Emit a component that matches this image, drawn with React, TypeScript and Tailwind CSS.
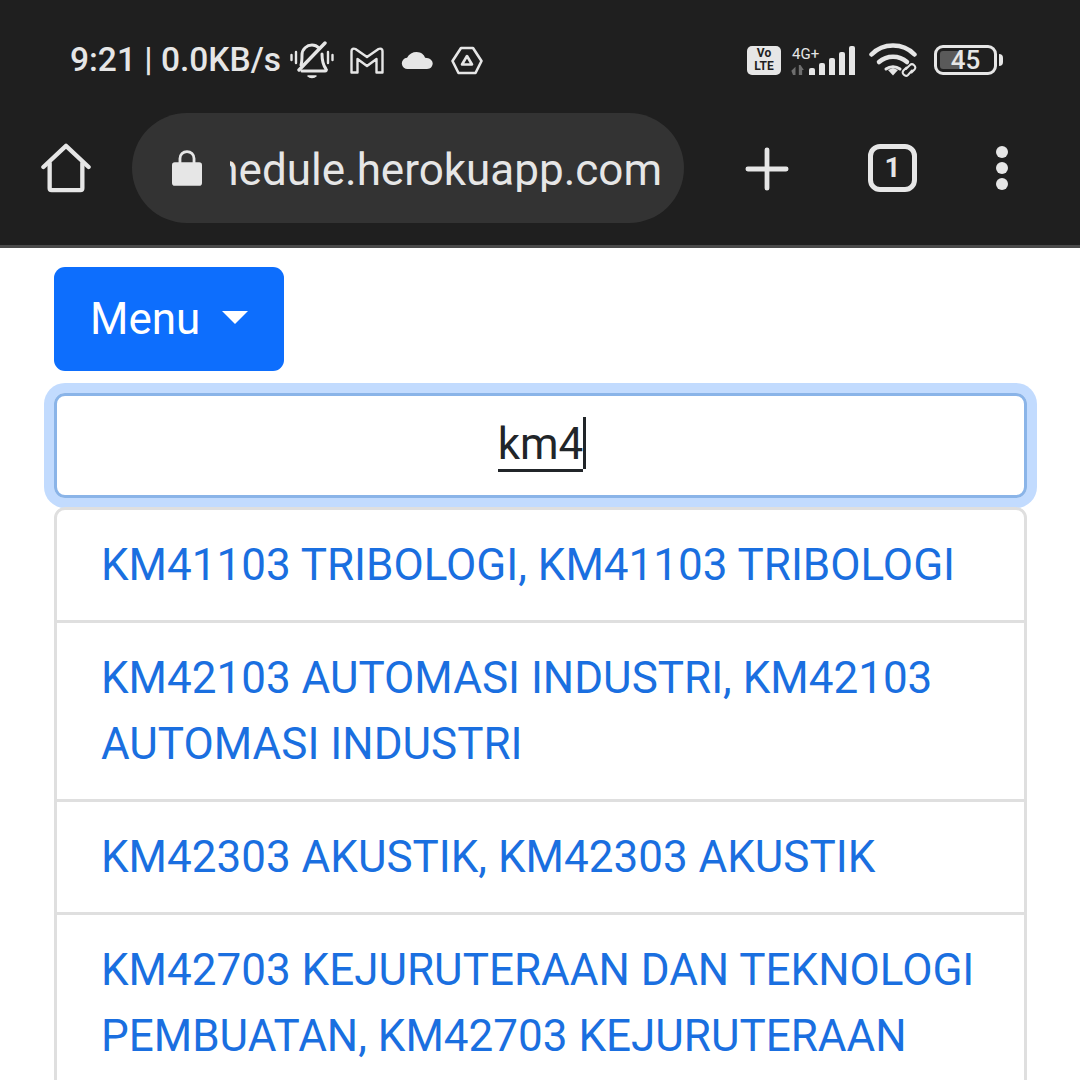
const results = [
  "KM41103 TRIBOLOGI, KM41103 TRIBOLOGI",
  "KM42103 AUTOMASI INDUSTRI, KM42103 AUTOMASI INDUSTRI",
  "KM42303 AKUSTIK, KM42303 AKUSTIK",
  "KM42703 KEJURUTERAAN DAN TEKNOLOGI PEMBUATAN, KM42703 KEJURUTERAAN DAN TEKNOLOGI PEMBUATAN",
];

function MutedBell() {
  return (
    <svg width="44" height="38" viewBox="0 0 44 38" fill="none" stroke="#e6e6e6" strokeWidth="3" strokeLinecap="round" strokeLinejoin="round">
      <path d="M11 24c1-3 1-6 1-10 0-6 5-10 10-10 3 0 5 1 7 3" />
      <path d="M32 13c0 7 1 11 4 15 1 1 0 2-1 2H12" />
      <path d="M35 2 9 29" strokeWidth="3.4" />
      <path d="M18 35c2 2 6 2 8 0z" fill="#e6e6e6" strokeWidth="1.5" />
      <path d="M6 11v11M1.500 14v5M38 11v11M42.500 14v5" strokeWidth="2.4" />
    </svg>
  );
}

function GmailIcon() {
  return (
    <svg width="34" height="27" viewBox="0 0 34 27" fill="none" stroke="#e6e6e6" strokeWidth="2.4" strokeLinejoin="round">
      <path d="M1.500 4c0-2 2-3 4-2l11.500 8 11.500-8c2-1 4 0 4 2v21.500h-6V12l-9.500 7-9.500-7v13.500h-6z" />
    </svg>
  );
}

function DriveIcon() {
  return (
    <svg width="32" height="29" viewBox="0 0 32 29" fill="none" stroke="#e6e6e6" strokeWidth="2.6" strokeLinejoin="round">
      <path d="M10 2h12l8.500 13-6 12H7.500l-6-12z" />
      <path d="M16 10l5 8.500H11z" />
    </svg>
  );
}

function SignalBars() {
  const heights = [7, 12, 17, 23, 29];
  return (
    <div className="flex items-end gap-[4px]">
      {heights.map((h) => (
        <div key={h} className="w-[6px] rounded-t-[2px] bg-[#e6e6e6]" style={{ height: h }} />
      ))}
    </div>
  );
}

function WifiLink() {
  return (
    <svg width="50" height="35" viewBox="0 0 50 35" fill="none" strokeLinecap="round">
      <path d="M2.500 11.500C14 -0.500 34 -0.500 45.500 11.500" stroke="#e6e6e6" strokeWidth="4.500" />
      <path d="M10 19c8-7 20-7 28 0" stroke="#e6e6e6" strokeWidth="4.500" />
      <path d="M17 26c4-3 10-3 14 0" stroke="#e6e6e6" strokeWidth="3" />
      <path d="M19 27l5-2 5 2-5 5.500z" fill="#e6e6e6" />
      <path d="M37 26l4-4c2.500-2.500 7 1.500 4.500 4.500l-3 3M43 27.500l-4 4.500c-2.500 2.500-7-1.500-4.500-4.500l3-3" stroke="#e6e6e6" strokeWidth="2" />
    </svg>
  );
}

function Battery() {
  return (
    <div className="flex items-center gap-[2px]">
      <div className="relative h-[30px] w-[63px] rounded-[9px] border-[3px] border-[#e6e6e6] p-[3px]">
        <div className="h-full w-[42%] rounded-[3px] bg-[#5a5a5a]" />
        <span className="absolute inset-0 flex items-center justify-center text-[26px] font-medium leading-none text-[#e6e6e6]">45</span>
      </div>
      <div className="h-[12px] w-[4px] rounded-r-full bg-[#e6e6e6]" />
    </div>
  );
}

function StatusBar() {
  return (
    <div className="flex h-[113px] items-center justify-between pl-[70px] pr-[77px] pt-[7px] text-[#e6e6e6]">
      <div className="flex items-center">
        <span className="text-[33.500px] font-medium leading-none">9:21 | 0.0KB/s</span>
        <span className="ml-[9px] flex"><MutedBell /></span>
        <span className="ml-[16px] flex"><GmailIcon /></span>
        <svg className="ml-[17px]" width="33" height="19" viewBox="0 0 34 20" fill="#e6e6e6">
          <path d="M7 19a6 6 0 0 1-1-12c2-4 6-6 10-6 5 0 8 3 9 6 5 0 8 3 8 6s-2 6-6 6z" />
        </svg>
        <span className="ml-[17px] flex"><DriveIcon /></span>
      </div>
      <div className="flex items-center">
        <div className="flex h-[29px] w-[34px] flex-col items-center justify-center rounded-[5px] bg-[#e6e6e6] text-[12px] font-bold leading-[13px] text-[#1f1f1f]">
          <span>Vo</span>
          <span>LTE</span>
        </div>
        <div className="ml-[9px] flex items-end">
          <div className="flex w-[19px] flex-col overflow-visible">
            <span className="whitespace-nowrap pl-[2px] text-[15px] leading-[19px]">4G+</span>
            <svg className="mt-[1px]" width="16" height="10" viewBox="0 0 16 12" fill="#6e6e6e">
              <path d="M0 7l5-5v10H2zM9 0h2l4 6h-2v6H9z" />
            </svg>
          </div>
          <SignalBars />
        </div>
        <span className="ml-[14px] flex"><WifiLink /></span>
        <span className="ml-[15px] flex"><Battery /></span>
      </div>
    </div>
  );
}

function Toolbar() {
  return (
    <div className="flex h-[135px] items-start border-b-[3px] border-[#4a4a4a] pb-[3px]">
      <div className="flex h-[110px] w-[132px] items-center justify-center">
        <svg width="50" height="50" viewBox="0 0 52 52" fill="none" stroke="#e6e6e6" strokeWidth="4.500" strokeLinecap="round" strokeLinejoin="round">
          <path d="M2.500 25 26 3l23.500 22" />
          <path d="M9 21v26a2 2 0 0 0 2 2h30a2 2 0 0 0 2-2V21" />
        </svg>
      </div>
      <div className="flex h-[110px] w-[552px] items-center overflow-hidden rounded-full bg-[#333333] pl-[40px]">
        <svg className="mb-[2px] shrink-0" width="30" height="38" viewBox="0 0 32 40" fill="#e6e6e6">
          <path d="M3 15h4v-4a9 9 0 0 1 18 0v4h4a3 3 0 0 1 3 3v19a3 3 0 0 1-3 3H3a3 3 0 0 1-3-3V18a3 3 0 0 1 3-3zm7 0h12v-4a6 6 0 0 0-12 0z" />
        </svg>
        <div className="ml-[28px] w-[432px] overflow-hidden">
          <div className="mt-[4px] flex justify-end whitespace-nowrap text-[44px] leading-none text-[#e6e6e6]">
            schedule.herokuapp.com
          </div>
        </div>
      </div>
      <div className="flex h-[110px] flex-1 items-center">
        <svg className="ml-[61px] mt-[2px]" width="44" height="44" viewBox="0 0 46 46" fill="none" stroke="#e6e6e6" strokeWidth="5" strokeLinecap="round">
          <path d="M23 3v40M3 23h40" />
        </svg>
        <div className="ml-[79px] flex h-[48px] w-[49px] items-center justify-center rounded-[12px] border-[5px] border-[#e6e6e6] text-[28px] font-bold leading-none text-[#e6e6e6]">
          1
        </div>
        <div className="ml-[79px] flex flex-col gap-[4px]">
          <div className="h-[12px] w-[12px] rounded-full bg-[#e6e6e6]" />
          <div className="h-[12px] w-[12px] rounded-full bg-[#e6e6e6]" />
          <div className="h-[12px] w-[12px] rounded-full bg-[#e6e6e6]" />
        </div>
      </div>
    </div>
  );
}

export default function App() {
  return (
    <div className="h-[1080px] w-[1080px] overflow-hidden bg-white font-['Roboto',sans-serif]">
      <div className="bg-[#1f1f1f]">
        <StatusBar />
        <Toolbar />
      </div>
      <div className="pl-[54px] pr-[53px] pt-[19px]">
        <button className="flex h-[104px] w-[230px] items-center rounded-[11px] bg-[#0d6efd] pl-[36px] text-[44px] leading-none text-white">
          Menu
          <span className="mb-[3px] ml-[22px] h-0 w-0 border-x-[13px] border-t-[13px] border-x-transparent border-t-white" />
        </button>
        <div className="mt-[22px] flex h-[105px] items-center justify-center rounded-[11px] border-[3px] border-[#8ab4e8] shadow-[0_0_0_10px_#c2dbfe]">
          <span className="relative border-b-[3px] border-[#212529] text-[44px] leading-[50px] text-[#212529]">
            km4
            <span className="absolute -right-[3px] -top-[2px] bottom-0 w-[3px] bg-[#212529]" />
          </span>
        </div>
        <div className="mt-[9px] overflow-hidden rounded-[11px] border-[3px] border-[#dfdfdf]">
          {results.map((r, i) => (
            <div key={r} className={`px-[44px] py-[22px] text-[44px] leading-[66px] text-[#1a6fe0] ${i > 0 ? "border-t-[3px] border-[#dfdfdf]" : ""}`}>
              {r}
            </div>
          ))}
        </div>
      </div>
    </div>
  );
}
